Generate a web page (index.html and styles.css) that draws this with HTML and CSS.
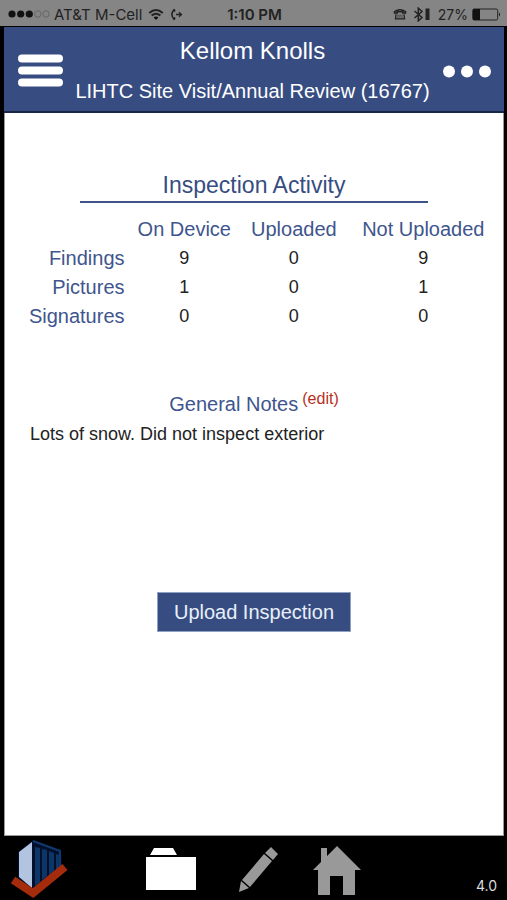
FILE: index.html
```html
<!DOCTYPE html>
<html lang="en">
<head>
<meta charset="utf-8">
<meta name="viewport" content="width=device-width, initial-scale=1">
<title>Kellom Knolls</title>
<link rel="stylesheet" href="styles.css">
</head>
<body>
<div class="status">
  <div class="status-side">
    <svg class="signal" width="42" height="10" viewBox="0 0 42 10" aria-hidden="true">
      <circle cx="4" cy="5" r="3.6"/><circle cx="12.7" cy="5" r="3.6"/><circle cx="21.3" cy="5" r="3.6"/>
      <circle class="off" cx="29.8" cy="5" r="3.2"/><circle class="off" cx="38" cy="5" r="3.2"/>
    </svg>
    <span>AT&amp;T M-Cell</span>
    <svg class="line wifi" width="16" height="13" viewBox="0 0 16 13" aria-hidden="true">
      <path d="M1.2 5Q8-1 14.8 5M3.6 7.6Q8 3.8 12.4 7.6"/><path class="solid" d="M5.6 9.5Q8 7.6 10.4 9.5L8 12z"/>
    </svg>
    <svg class="line" width="13" height="13" viewBox="0 0 13 13" aria-hidden="true">
      <path d="M4.5 1.2Q-.8 6.500 4.500 11.800" stroke-width="1.500"/><path d="M3.500 1.500l1.500 2M3.500 11.500l1.500-2" stroke-width="2"/><path d="M6 6.500h5M9 4.200l2.500 2.300L9 8.800" stroke-width="1.300"/>
    </svg>
  </div>
  <span class="time">1:10 PM</span>
  <div class="status-side end">
    <svg class="line" width="14" height="12" viewBox="0 0 14 12" aria-hidden="true">
      <path d="M1.500 5V3.500Q7-.2 12.500 3.500V5h-2.700V3.800H4.200V5z" stroke-width="1.500"/><path d="M3 6.200L2.500 10.800h9L11 6.200" stroke-width="1.300"/><path d="M4.500 7.200h5M4.300 9h5.400" stroke-width="1" stroke-dasharray="1.200 .8"/>
    </svg>
    <svg class="line bluetooth" width="17" height="15" viewBox="0 0 17 15" aria-hidden="true">
      <path d="M1.500 4L9 10.500 5.300 13.800V1.200L9 4.500 1.500 11" stroke-width="1.500"/><path d="M14.500 1.500v11.500" stroke-width="4"/>
    </svg>
    <span class="percent">27%</span>
    <svg class="line" width="29" height="13" viewBox="0 0 29 13" aria-hidden="true">
      <rect x=".7" y="1" width="25" height="11" rx="1.500" stroke-width="1"/><path class="solid" d="M1 1h7v11H1zM27 4.500q2 2 0 4z"/>
    </svg>
  </div>
</div>
<div class="app">
  <header class="header">
    <button class="icon-button" type="button" aria-label="Menu">
      <svg width="45" height="34" viewBox="0 0 45 34"><path d="M4 4.500h37M4 16.500h37M4 28.500h37" stroke="#fff" stroke-width="8" stroke-linecap="round"/></svg>
    </button>
    <div class="heading">
      <h1>Kellom Knolls</h1>
      <p>LIHTC Site Visit/Annual Review (16767)</p>
    </div>
    <button class="icon-button" type="button" aria-label="More">
      <svg width="50" height="13" viewBox="0 0 50 13" fill="#fff"><circle cx="7" cy="6.500" r="6"/><circle cx="25" cy="6.500" r="6"/><circle cx="43" cy="6.500" r="6"/></svg>
    </button>
  </header>
  <main class="content">
    <h2 class="section-title">Inspection Activity</h2>
    <table class="activity">
      <colgroup><col class="col-label"><col class="col-device"><col class="col-uploaded"><col class="col-pending"></colgroup>
      <thead><tr><td></td><th scope="col">On Device</th><th scope="col">Uploaded</th><th scope="col">Not Uploaded</th></tr></thead>
      <tbody>
        <tr><th scope="row">Findings</th><td>9</td><td>0</td><td>9</td></tr>
        <tr><th scope="row">Pictures</th><td>1</td><td>0</td><td>1</td></tr>
        <tr><th scope="row">Signatures</th><td>0</td><td>0</td><td>0</td></tr>
      </tbody>
    </table>
    <section class="notes">
      <div class="notes-head"><h2>General Notes</h2><a href="#edit">(edit)</a></div>
      <p>Lots of snow. Did not inspect exterior</p>
    </section>
    <button class="upload" type="button">Upload Inspection</button>
  </main>
</div>
<footer class="footer">
  <svg class="logo" width="60" height="60" viewBox="0 0 60 60" aria-hidden="true">
    <path d="M8 14L23 2 51 12 52 31 23 51 8 40z" fill="#03102c"/>
    <path d="M9 14L22 4V50L9 39z" fill="#b3c4e0"/>
    <path d="M23 3L50 13V30" fill="none" stroke="#12386d" stroke-width="2"/>
    <path d="M25 9l5 1v34l-5 4zM32 11l5 1v26l-5 4zM39 13l5 2v18l-5 4zM46 16l4 1v12l-4 3z" fill="#0c3668"/>
    <path d="M3 42L23 55 55 29" fill="none" stroke="#a52b0d" stroke-width="8"/>
  </svg>
  <nav class="tabs">
    <a href="#inspections" aria-label="Inspections"><svg width="50" height="52" viewBox="0 0 50 52"><path d="M4 9L8 2h19l4 7zM0 11h50v33H0z" fill="#fff"/></svg></a>
    <a href="#edit" aria-label="Edit"><svg width="50" height="52" viewBox="0 0 50 52" fill="#999"><path d="M42 1L49 8 44 14 36 7zM35 8L43 15 21 41 13 34zM12 35L20 42 10 46z"/></svg></a>
    <a href="#home" aria-label="Home"><svg width="50" height="52" viewBox="0 0 50 52" fill="#999"><path d="M25 0L49 24H43V49H31V30H18V49H6V24H1L9 16V2h6v8z"/></svg></a>
  </nav>
  <span class="version">4.0</span>
</footer>
</body>
</html>
```

FILE: styles.css
```css
* { box-sizing: border-box; }
body {
  margin: 0;
  min-height: 100vh;
  display: flex;
  flex-direction: column;
  background: #000;
  color: #222;
  font-family: "Liberation Sans", Arial, sans-serif;
  font-size: 18px;
}
h1, h2, p { margin: 0; font-weight: 400; }
svg { display: block; flex: none; }
button { font: inherit; cursor: pointer; }

.status {
  display: grid;
  grid-template-columns: 1fr auto 1fr;
  align-items: center;
  height: 26px;
  padding: 2px 6px 0 8px;
  background: #858585;
  color: #222;
  font-family: Inter, sans-serif;
  font-size: 15px;
}
.status-side { display: flex; align-items: center; gap: 4px; white-space: nowrap; }
.end { justify-content: flex-end; }
.time { font-weight: 600; }
.percent { font-size: 14px; }
.wifi { margin: 0 2px; }
.bluetooth { margin: 0 4px 0 2px; }
.signal { fill: #111; }
.signal .off { fill: none; stroke: #666; }
.line { fill: none; stroke: #222; stroke-width: 2; }
.line .solid { fill: #111; stroke: none; }

.app { flex: 1; display: flex; flex-direction: column; margin: 1px 3px 0 4px; }
.header {
  display: flex;
  align-items: center;
  justify-content: space-between;
  height: 86px;
  padding: 4px 12px 0 14px;
  border-bottom: 2px solid #182544;
  background: #374d82;
  color: #fff;
}
.heading { flex: 1; text-align: center; white-space: nowrap; }
.heading h1 { font-size: 24px; line-height: 40px; }
.heading p { font-size: 20px; line-height: 40px; }
.icon-button { padding: 0; border: 0; background: none; }

.content {
  flex: 1;
  display: flex;
  flex-direction: column;
  padding-top: 56px;
  border: 1px solid #999;
  border-top: 0;
  background: #fff;
}
.section-title {
  width: 70%;
  margin: 0 auto;
  border-bottom: 2px solid #3c5488;
  color: #374d82;
  font-size: 23px;
  line-height: 32px;
  text-align: center;
}
.activity {
  width: 100%;
  margin-top: 12px;
  border-collapse: collapse;
  table-layout: fixed;
  line-height: 29px;
  text-align: center;
}
.activity td, .activity th { padding: 0; }
.activity th { color: #40558d; font-size: 20px; font-weight: 400; white-space: nowrap; }
.activity tbody th { text-align: right; }
.col-label, .col-device { width: 24%; }
.col-uploaded { width: 20%; }
.col-pending { width: 32%; }

.notes { margin-top: 58px; padding: 0 25px; line-height: 30px; }
.notes-head { display: flex; justify-content: center; gap: 4px; }
.notes h2 { color: #40558d; font-size: 20px; }
.notes a { color: #b62f1e; font-size: 16px; line-height: 20px; text-decoration: none; }
.upload {
  align-self: center;
  height: 40px;
  margin-top: 143px;
  padding: 0 16px;
  border: 1px solid #8fa2c4;
  background: #374d82;
  color: #e8effa;
  font-size: 20px;
}

.footer {
  display: grid;
  grid-template-columns: 1fr auto 1fr;
  align-items: center;
  height: 64px;
  padding: 0 10px;
}
.tabs { display: flex; gap: 33px; padding-top: 8px; }
.version {
  align-self: end;
  justify-self: end;
  padding-bottom: 6px;
  color: #ddd;
  font-family: Inter, sans-serif;
  font-size: 14px;
}
```
